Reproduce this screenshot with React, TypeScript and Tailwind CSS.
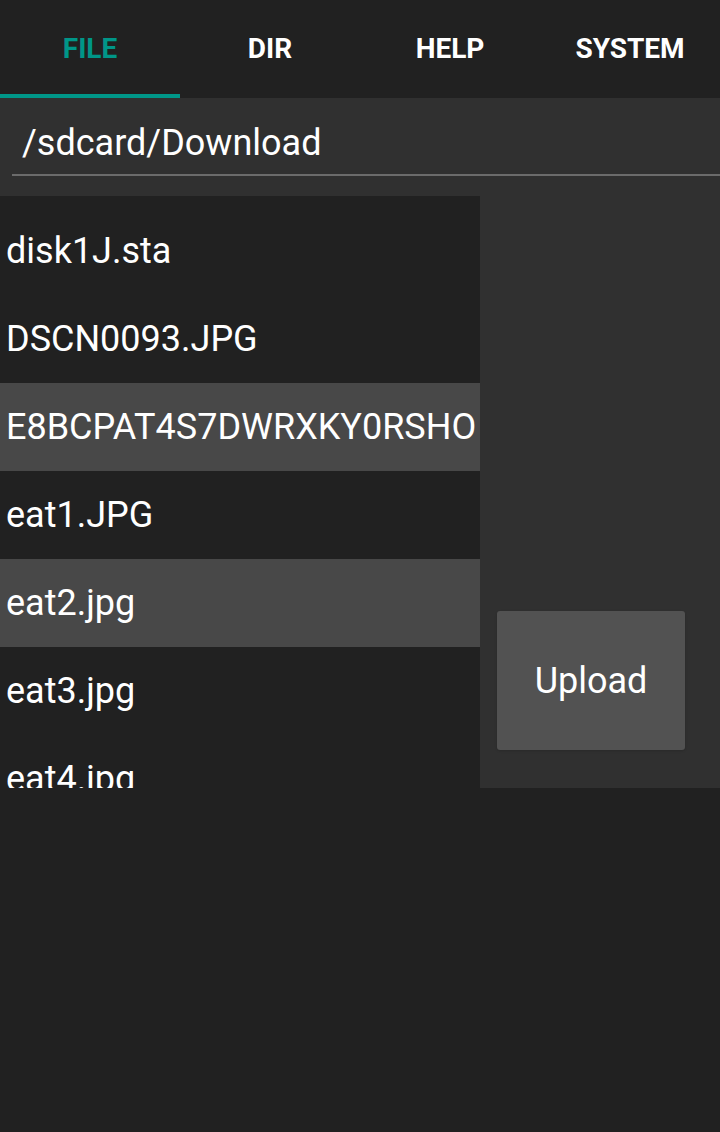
import React from 'react';

const tabs = ['FILE', 'DIR', 'HELP', 'SYSTEM'];

const files = [
  { name: 'disk1J.sta', selected: false },
  { name: 'DSCN0093.JPG', selected: false },
  { name: 'E8BCPAT4S7DWRXKY0RSHO', selected: true },
  { name: 'eat1.JPG', selected: false },
  { name: 'eat2.jpg', selected: true },
  { name: 'eat3.jpg', selected: false },
  { name: 'eat4.jpg', selected: false },
];

export default function App() {
  return (
    <div className="w-[720px] h-[1132px] bg-[#212121] text-white font-['Roboto',sans-serif] flex flex-col">
      {/* Tabs */}
      <div className="flex h-[98px] bg-[#212121]">
        {tabs.map((t, i) => (
          <div key={t} className="flex-1 flex flex-col">
            <div
              className={`flex-1 flex items-center justify-center pt-[4px] text-[28px] font-bold ${
                i === 0 ? 'text-[#009688]' : 'text-white'
              }`}
            >
              {t}
            </div>
            <div className={`h-[4px] ${i === 0 ? 'bg-[#009688]' : 'bg-transparent'}`} />
          </div>
        ))}
      </div>

      {/* Path + list panel */}
      <div className="bg-[#303030] h-[690px] flex flex-col">
        <div className="h-[98px] pl-[12px] flex flex-col">
          <div className="flex-1 flex items-center pl-[10px] text-[36px] pt-[14px]">/sdcard/Download</div>
          <div className="h-[2px] bg-[#6b6b6b] mb-[20px]" />
        </div>
        <div className="flex flex-1 min-h-0">
          <div className="w-[480px] bg-[#212121] pt-[11px] overflow-hidden">
            {files.map((f) => (
              <div
                key={f.name}
                className={`h-[88px] flex items-center pl-[6px] text-[36px] whitespace-nowrap overflow-hidden ${
                  f.selected ? 'bg-[#484848]' : ''
                }`}
              >
                {f.name}
              </div>
            ))}
          </div>
          <div className="flex-1 flex flex-col justify-end pl-[17px] pr-[35px] pb-[38px]">
            <button className="h-[139px] w-full bg-[#525252] rounded-[3px] text-[36px] text-white shadow-sm">
              Upload
            </button>
          </div>
        </div>
      </div>
    </div>
  );
}
